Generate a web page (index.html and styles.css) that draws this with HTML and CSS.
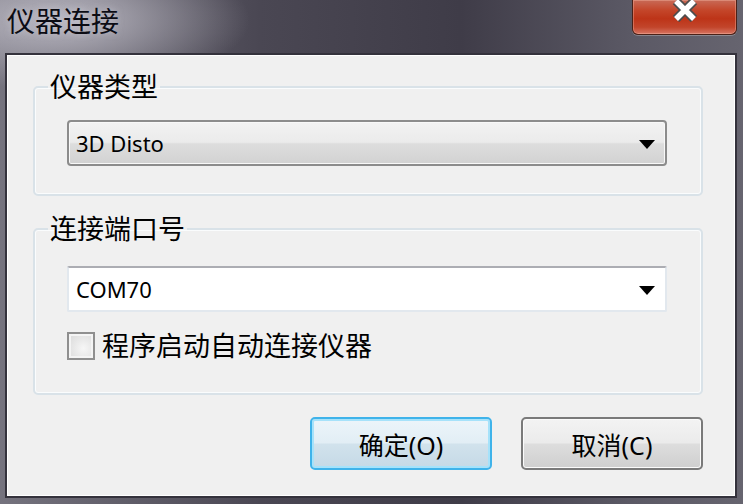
FILE: index.html
```html
<!DOCTYPE html>
<html>
<head>
<meta charset='UTF-8'>
<link rel="stylesheet" href="styles.css">
</head>
<body>
<div class='window'>
<div class='titlebar'>
<span class='title'>仪器连接</span>
<div class='close'>
<svg width='28' height='22' viewBox='0 4 28 22'>
<path d='M5 5 L23 23 M23 5 L5 23' stroke='#4d4d4d' stroke-width='9' fill='none'/>
<path d='M5 5 L23 23 M23 5 L5 23' stroke='#ffffff' stroke-width='5.5' fill='none'/>
</svg>
</div>
</div>
<div class='client'>
<fieldset class='group group-type'>
<legend>仪器类型</legend>
<div class='group-body'>
<div class='combo combo-list'>
<span>3D Disto</span>
<i class='arrow'></i>
</div>
</div>
</fieldset>
<fieldset class='group group-port'>
<legend>连接端口号</legend>
<div class='group-body'>
<div class='combo combo-edit'>
<span>COM70</span>
<i class='arrow'></i>
</div>
<label class='check'>
<span class='box'></span>
程序启动自动连接仪器
</label>
</div>
</fieldset>
<div class='buttons'>
<button class='btn btn-default'>确定(O)</button>
<button class='btn'>取消(C)</button>
</div>
</div>
</div>
</body>
</html>
```

FILE: styles.css
```css
/* Variables */

:root {
    --face: #f0f0f0;
    --group-border: #d9e2e8;
    --text: #000;
    --cjk: "Noto Sans", "Noto Sans CJK SC", sans-serif;
}

* {
    margin: 0;
    padding: 0;
    box-sizing: border-box;
}

body {
    width: 743px;
    height: 504px;
    overflow: hidden;
    font-family: var(--cjk);
    color: var(--text);
}

/* Window frame */

.window {
    width: 743px;
    height: 504px;
    display: flex;
    flex-direction: column;
    background:
    radial-gradient(ellipse 190px 70px at 60px 20px, rgba(200, 198, 208, 0.85), rgba(200, 198, 208, 0) 100%),
    linear-gradient(to right, #75737e 0%, #4a4753 35%, #3f3c48 62%, #5b5965 85%, #66646f 100%);
}

.titlebar {
    height: 53px;
    display: flex;
    align-items: flex-start;
    padding-left: 7px;
}

.title {
    font-size: 28px;
    line-height: 28px;
    padding-top: 7px;
    color: #0c0c14;
    text-shadow: 0 0 6px rgba(220, 220, 230, 0.5);
}

.close {
    margin-left: auto;
    margin-right: 6px;
    width: 105px;
    height: 35px;
    border: 1px solid #4a2118;
    border-top: 0;
    border-radius: 0 0 6px 6px;
    box-shadow: 0 1px 0 rgba(255, 255, 255, 0.25), inset 0 0 0 1px rgba(255, 200, 180, 0.35);
    background: linear-gradient(#c86a57 0%, #c4462a 30%, #bd3418 55%, #c2452b 80%, #d77563 100%);
    display: flex;
    justify-content: center;
    align-items: flex-start;
}

/* Client area */

.client {
    margin: 0 6px 0 5px;
    height: 445px;
    border: 2px solid #34323c;
    box-shadow: inset 0 0 0 1px #ffffff;
    background: var(--face);
    display: flex;
    flex-direction: column;
}

/* Group boxes */

.group {
    border: 2px solid var(--group-border);
    border-radius: 5px;
    box-shadow: inset 0 0 0 1px #fafcfd;
    margin: 0 32px 0 26px;
}

.group legend {
    font-size: 27px;
    line-height: 34px;
    margin-left: 13px;
    padding: 0 2px;
}

.group-type {
    margin-top: 15px;
}

.group-type .group-body {
    padding: 16px 34px 28px 32px;
}

.group-port {
    margin-top: 16px;
}

.group-port .group-body {
    padding: 20px 34px 34px 32px;
}

/* Combo boxes */

.combo {
    height: 46px;
    display: flex;
    align-items: center;
    padding: 0 10px 0 7px;
    font-size: 22px;
    border-radius: 4px;
}

.combo span {
    flex: 1;
}

.combo-list {
    border: 2px solid #8c8c8c;
    box-shadow: inset 0 0 0 1px #f8f8f8;
    background: linear-gradient(#f2f2f2 0%, #ebebeb 48%, #dddddd 52%, #d2d2d2 100%);
}

.combo-edit {
    background: #ffffff;
    border: 2px solid #e2e8ee;
    border-top-color: #acadb3;
    border-radius: 2px;
}

.arrow {
    width: 0;
    height: 0;
    border-left: 8px solid transparent;
    border-right: 8px solid transparent;
    border-top: 9px solid #000;
    margin-top: 2px;
}

/* Checkbox */

.check {
    margin-top: 20px;
    display: flex;
    align-items: center;
    height: 27px;
    font-size: 27px;
    line-height: 27px;
}

.box {
    width: 28px;
    height: 28px;
    margin-right: 7px;
    border: 2px solid #8f8f8f;
    background: radial-gradient(circle at 60% 60%, #f6f6f6 0%, #d8d8d8 100%);
    box-shadow: inset 0 0 0 2px #f4f4f4;
}

/* Buttons */

.buttons {
    margin: 22px 32px 0 0;
    display: flex;
    justify-content: flex-end;
    gap: 29px;
}

.btn {
    width: 182px;
    height: 53px;
    font-family: var(--cjk);
    font-size: 25px;
    color: #000;
    border: 2px solid #7a7a7a;
    border-radius: 5px;
    box-shadow: inset 0 0 0 1px #fbfbfb;
    background: linear-gradient(#f3f3f3 0%, #ebebeb 48%, #dddddd 52%, #cfcfcf 100%);
}

.btn-default {
    border-color: #3fb3ea;
    box-shadow: inset 0 0 0 2px #a6e2fa;
    background: linear-gradient(#ecf5fa 0%, #e2eef5 48%, #d1e2ec 52%, #c5d9e6 100%);
}
```
